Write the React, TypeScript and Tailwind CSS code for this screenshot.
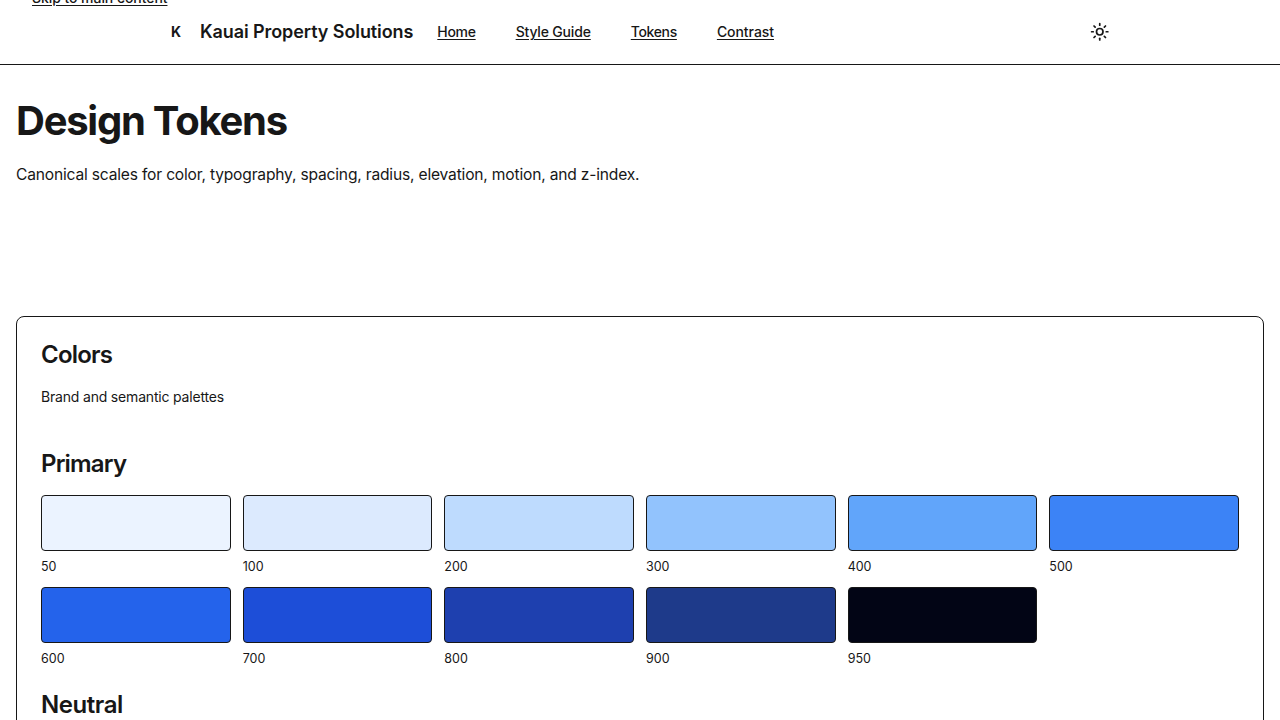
import { Sun } from "lucide-react";

type Swatch = { step: string; color: string };

const primary: Swatch[] = [
  { step: "50", color: "bg-[#ebf3ff]" },
  { step: "100", color: "bg-[#dceafe]" },
  { step: "200", color: "bg-[#bedbfe]" },
  { step: "300", color: "bg-[#92c3fd]" },
  { step: "400", color: "bg-[#61a5fa]" },
  { step: "500", color: "bg-[#3c83f6]" },
  { step: "600", color: "bg-[#2463eb]" },
  { step: "700", color: "bg-[#1d4ed8]" },
  { step: "800", color: "bg-[#1e40af]" },
  { step: "900", color: "bg-[#1e3a8a]" },
  { step: "950", color: "bg-[#020515]" },
];

const links = [
  { label: "Home", tracking: "tracking-[-0.3px]" },
  { label: "Style Guide", tracking: "tracking-[-0.17px]" },
  { label: "Tokens", tracking: "tracking-[-0.35px]" },
  { label: "Contrast", tracking: "tracking-[-0.05px]" },
];

function Palette({ swatches }: { swatches: Swatch[] }) {
  return (
    <div className="mt-[18px] grid grid-cols-6 gap-3">
      {swatches.map((s) => (
        <div key={s.step}>
          <div className={`h-14 rounded border border-[#171717] ${s.color}`} />
          <div className="mt-1.5 pt-px text-[12.5px] leading-[17px]">{s.step}</div>
        </div>
      ))}
    </div>
  );
}

export default function App() {
  return (
    <div className="h-[720px] overflow-hidden bg-white font-['Inter',sans-serif] text-[#171717]">
      <header className="relative h-[65px] border-b border-[#171717]">
        <a
          href="#main"
          className="absolute -top-3 left-8 text-sm leading-5 font-medium tracking-[-0.06px] underline underline-offset-2"
        >
          Skip to main content
        </a>
        <div className="mx-auto flex h-16 max-w-5xl items-center px-8">
          <span className="flex size-8 items-center justify-center text-sm font-bold">K</span>
          <span className="ml-2 text-lg font-semibold tracking-[-0.09px]">Kauai Property Solutions</span>
          <nav className="ml-6 flex gap-10 text-sm font-medium underline-offset-2">
            {links.map((l) => (
              <a key={l.label} href="#main" className={`underline ${l.tracking}`}>
                {l.label}
              </a>
            ))}
          </nav>
          <button aria-label="Toggle theme" className="mb-px ml-auto flex size-10 items-center justify-center">
            <Sun size={19.5} strokeWidth={2.1} />
          </button>
        </div>
      </header>
      <main id="main" className="px-4 pt-8">
        <h1 className="text-[40px] leading-[47px] font-bold tracking-[-1.25px]">Design Tokens</h1>
        <p className="mt-[18px] text-[15.6px] leading-[26px] tracking-[-0.19px]">
          Canonical scales for color, typography, spacing, radius, elevation, motion, and z-index.
        </p>
        <section className="mt-[128px] rounded-lg border border-[#171717] p-6">
          <h2 className="text-2xl leading-[27px] font-semibold tracking-[-0.78px]">Colors</h2>
          <p className="mt-[19px] text-sm tracking-[-0.185px]">Brand and semantic palettes</p>
          <h3 className="mt-[43px] text-2xl leading-[27px] font-semibold tracking-[-0.82px]">Primary</h3>
          <Palette swatches={primary} />
          <h3 className="mt-6 text-2xl leading-[27px] font-semibold tracking-[-0.45px]">Neutral</h3>
        </section>
      </main>
    </div>
  );
}
